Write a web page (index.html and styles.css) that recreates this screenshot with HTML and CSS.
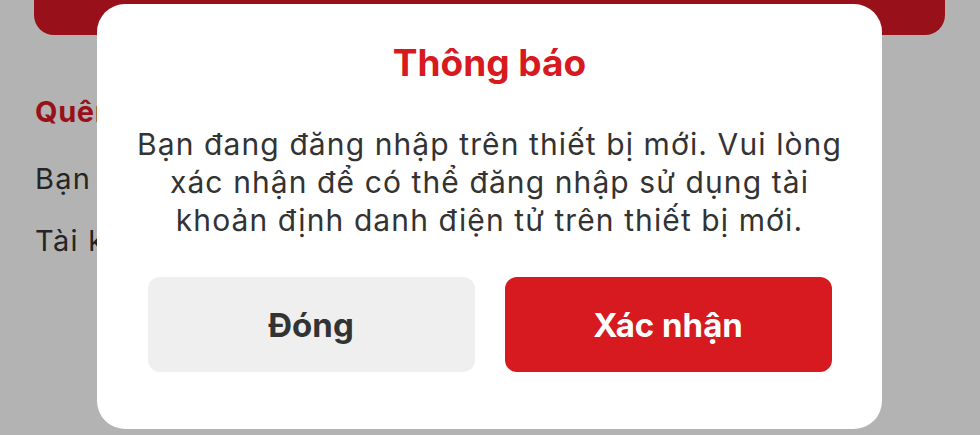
FILE: index.html
```html
<!DOCTYPE html>
<html lang="vi">
<head>
<meta charset="utf-8">
<link rel="stylesheet" href="styles.css">
</head>
<body>
<div class="page">
  <div class="topbar"></div>
  <div class="content">
    <div class="section-title">Quên mật khẩu</div>
    <div class="line line-first">Bạn đang đăng nhập</div>
    <div class="line line-second">Tài khoản</div>
  </div>
</div>
<div class="dialog">
  <div class="title">Thông báo</div>
  <div class="message">Bạn đang đăng nhập trên thiết bị mới. Vui lòng<br>xác nhận để có thể đăng nhập sử dụng tài<br>khoản định danh điện tử trên thiết bị mới.</div>
  <div class="actions">
    <button class="btn btn-secondary">Đóng</button>
    <button class="btn btn-primary">Xác nhận</button>
  </div>
</div>
</body>
</html>
```
FILE: styles.css
```css
html, body {
  margin: 0;
  padding: 0;
  width: 980px;
  height: 435px;
  overflow: hidden;
  background: #b3b3b3;
  font-family: Inter, "Noto Sans", sans-serif;
}
.page {
  display: flex;
  flex-direction: column;
}
.topbar {
  margin: 0 35px 0 34px;
  height: 35px;
  background: #98111a;
  border-radius: 0 0 20px 20px;
}
.content {
  margin-left: 35px;
  padding-top: 62px;
  display: flex;
  flex-direction: column;
  white-space: nowrap;
}
.section-title {
  color: #98111a;
  font-weight: 700;
  font-size: 29px;
  line-height: 30px;
  letter-spacing: 0.6px;
}
.line {
  color: #252525;
  font-size: 29px;
  line-height: 40px;
  letter-spacing: 1.3px;
}
.line-first {
  margin-top: 32px;
}
.line-second {
  margin-top: 22px;
}
.dialog {
  position: absolute;
  left: 97px;
  top: 4px;
  width: 785px;
  height: 425px;
  background: #fff;
  border-radius: 28px;
  display: flex;
  flex-direction: column;
  align-items: center;
  box-sizing: border-box;
  padding-top: 37px;
}
.title {
  color: #d71920;
  font-weight: 700;
  font-size: 37px;
  line-height: 44px;
}
.message {
  margin-top: 40px;
  color: #333;
  font-size: 30px;
  line-height: 38px;
  letter-spacing: 1.1px;
  text-align: center;
  white-space: nowrap;
}
.actions {
  margin-top: 38px;
  display: flex;
  gap: 30px;
}
.btn {
  width: 327px;
  height: 95px;
  border: none;
  border-radius: 12px;
  font-family: inherit;
  font-weight: 700;
  font-size: 33px;
  padding: 0;
}
.btn-secondary {
  background: #efefef;
  color: #333;
}
.btn-primary {
  background: #d71920;
  color: #fff;
}
```
